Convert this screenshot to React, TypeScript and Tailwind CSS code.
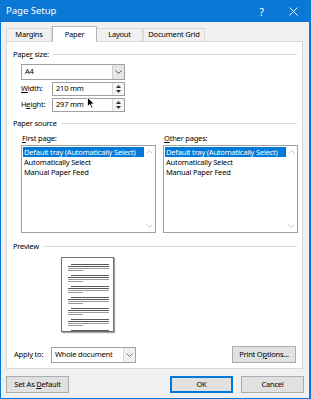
import React from "react";

const Header = ({ children }: { children: React.ReactNode }) => (
  <div className="flex items-center h-[11px] gap-[4px]">
    <span className="whitespace-nowrap">{children}</span>
    <div className="flex-1 h-px bg-[#dcdcdc]" />
  </div>
);

const Chevron = ({ up = false }: { up?: boolean }) => (
  <svg width="7" height="4" viewBox="0 0 7 4">
    <path
      d={up ? "M0.5 3.5 L3.5 0.5 L6.5 3.5" : "M0.5 0.5 L3.5 3.5 L6.5 0.5"}
      fill="none"
      stroke="currentColor"
      strokeWidth="1"
    />
  </svg>
);

const Spinner = ({ value }: { value: string }) => (
  <div className="w-[73px] h-[14px] flex border border-[#a0a0a0] bg-white">
    <div className="flex-1 pl-[3px] flex items-center">{value}</div>
    <div className="w-[12px] flex flex-col border-l border-[#d9d9d9] bg-[#f5f5f5] items-center justify-center gap-[2px]">
      <svg width="5" height="3" viewBox="0 0 5 3">
        <path d="M0 3 L2.5 0 L5 3 Z" fill="#333" />
      </svg>
      <svg width="5" height="3" viewBox="0 0 5 3">
        <path d="M0 0 L2.5 3 L5 0 Z" fill="#333" />
      </svg>
    </div>
  </div>
);

const ListBox = () => (
  <div className="w-[135px] h-[88px] border border-[#a0a0a0] bg-white flex">
    <div className="flex-1 pt-[1px] pl-[1px]">
      <div className="h-[10px] leading-[10px] bg-[#0078d7] text-white px-[1px] whitespace-nowrap">
        Default tray (Automatically Select)
      </div>
      <div className="h-[10px] leading-[10px] px-[1px]">Automatically Select</div>
      <div className="h-[10px] leading-[10px] px-[1px]">Manual Paper Feed</div>
    </div>
    <div className="w-[11px] flex flex-col justify-between items-center py-[4px] text-[#c2c2c2]">
      <Chevron up />
      <Chevron />
    </div>
  </div>
);

const PreviewPage = () => {
  const groups = [0, 1, 2, 3, 4, 5, 6];
  return (
    <div className="w-[53px] h-[75px] border border-[#6e6e6e] bg-white shadow-[1px_1px_1px_rgba(0,0,0,0.35)] overflow-hidden">
      <svg width="51" height="73" viewBox="0 0 51 73">
        {groups.map((g) => {
          const y = 6 + g * 11;
          return (
            <g key={g}>
              <rect x="9" y={y} width="38" height="1" fill="#5a5a5a" />
              <rect x="6" y={y + 2} width="41" height="1" fill="#5a5a5a" />
              <rect x="6" y={y + 4} width="41" height="1" fill="#9a9a9a" />
              <rect x="6" y={y + 6} width="15" height="1" fill="#9a9a9a" />
            </g>
          );
        })}
      </svg>
    </div>
  );
};

const Button = ({
  children,
  primary = false,
  className = "",
}: {
  children: React.ReactNode;
  primary?: boolean;
  className?: string;
}) => (
  <div
    className={`h-[17px] flex items-center justify-center bg-[#e1e1e1] ${
      primary ? "border-2 border-[#0078d7]" : "border border-[#adadad]"
    } ${className}`}
  >
    <span className="whitespace-nowrap">{children}</span>
  </div>
);

export default function App() {
  return (
    <div className="w-[311px] h-[399px] bg-[#0a78d4] flex flex-col font-['Noto_Sans',sans-serif] text-[7.5px] tracking-[-0.2px] text-black leading-none">
      {/* Title bar */}
      <div className="h-[22px] flex items-center pl-[6px] text-white tracking-normal">
        <span className="flex-1 text-[9.5px]">Page Setup</span>
        <span className="text-[11px] mr-[25px]">?</span>
        <svg width="9" height="9" viewBox="0 0 9 9" className="mr-[13px]">
          <path d="M0.5 0.5 L8.5 8.5 M8.5 0.5 L0.5 8.5" stroke="white" strokeWidth="1" />
        </svg>
      </div>

      {/* Body */}
      <div className="flex-1 ml-[1px] mr-[2px] mb-[1px] bg-[#f0f0f0] flex flex-col px-[5px]">
        {/* Tabs */}
        <div className="h-[19px] flex items-end">
          <div className="w-[46px] h-[13px] flex items-center justify-center border border-b-0 border-[#d9d9d9]">
            Margins
          </div>
          <div className="relative z-10 w-[45px] h-[16px] mb-[-1px] flex items-center justify-center bg-white border border-b-0 border-[#b4b4b4]">
            Paper
          </div>
          <div className="w-[46px] h-[13px] flex items-center justify-center border border-b-0 border-l-0 border-[#d9d9d9]">
            Layout
          </div>
          <div className="w-[62px] h-[13px] flex items-center justify-center border border-b-0 border-[#d9d9d9]">
            Document Grid
          </div>
        </div>

        {/* Panel */}
        <div className="w-[297px] h-[328px] bg-white border border-[#d9d9d9] flex flex-col pl-[6px] pr-[5px] pt-[7px] relative">
          <Header>
            Pape<u>r</u> size:
          </Header>

          <div className="ml-[8px] mt-[4px] w-[104px] h-[16px] flex border border-[#a0a0a0] bg-white">
            <div className="flex-1 pl-[3px] flex items-center">A4</div>
            <div className="w-[12px] bg-[#e5e5e5] border-l border-[#cfcfcf] flex items-center justify-center text-[#555]">
              <Chevron />
            </div>
          </div>

          <div className="ml-[8px] mt-[2px] flex items-center">
            <span className="w-[31px]">
              <u>W</u>idth:
            </span>
            <Spinner value="210 mm" />
          </div>
          <div className="ml-[8px] mt-[2px] flex items-center">
            <span className="w-[31px]">
              H<u>e</u>ight:
            </span>
            <Spinner value="297 mm" />
          </div>

          <div className="mt-[6px]">
            <Header>Paper source</Header>
          </div>

          <div className="ml-[8px] mt-[4px] flex gap-[7px]">
            <div className="flex flex-col gap-[2px]">
              <div className="h-[10px] leading-[10px] pl-[1px]">
                <u>F</u>irst page:
              </div>
              <ListBox />
            </div>
            <div className="flex flex-col gap-[2px]">
              <div className="h-[10px] leading-[10px] pl-[1px]">
                <u>O</u>ther pages:
              </div>
              <ListBox />
            </div>
          </div>

          <div className="mt-[8px]">
            <Header>Preview</Header>
          </div>

          <div className="ml-[48px] mt-[5px]">
            <PreviewPage />
          </div>

          <div className="mt-[14px] ml-[1px] flex items-center">
            <span className="w-[37px]">
              Appl<u>y</u> to:
            </span>
            <div className="w-[85px] h-[16px] flex border border-[#a0a0a0] bg-white">
              <div className="flex-1 pl-[3px] flex items-center">Whole document</div>
              <div className="w-[12px] bg-[#f0f0f0] border-l border-[#d9d9d9] flex items-center justify-center text-[#777]">
                <Chevron />
              </div>
            </div>
            <Button className="ml-auto mr-[1px] w-[64px] h-[16px]">
              Print O<u>p</u>tions...
            </Button>
          </div>

          {/* Mouse pointer */}
          <svg
            width="8"
            height="12"
            viewBox="0 0 8 12"
            className="absolute left-[80px] top-[55px]"
          >
            <path d="M0.5 0.5 L0.5 9.5 L2.8 7.4 L4.4 11 L5.8 10.4 L4.3 6.9 L7.3 6.9 Z" fill="black" stroke="white" strokeWidth="0.8" />
          </svg>
        </div>

        {/* Buttons */}
        <div className="mt-[7px] flex">
          <Button className="w-[63px]">
            Set As <u>D</u>efault
          </Button>
          <Button primary className="ml-auto w-[63px]">
            OK
          </Button>
          <Button className="ml-[8px] w-[63px]">Cancel</Button>
        </div>
      </div>
    </div>
  );
}
